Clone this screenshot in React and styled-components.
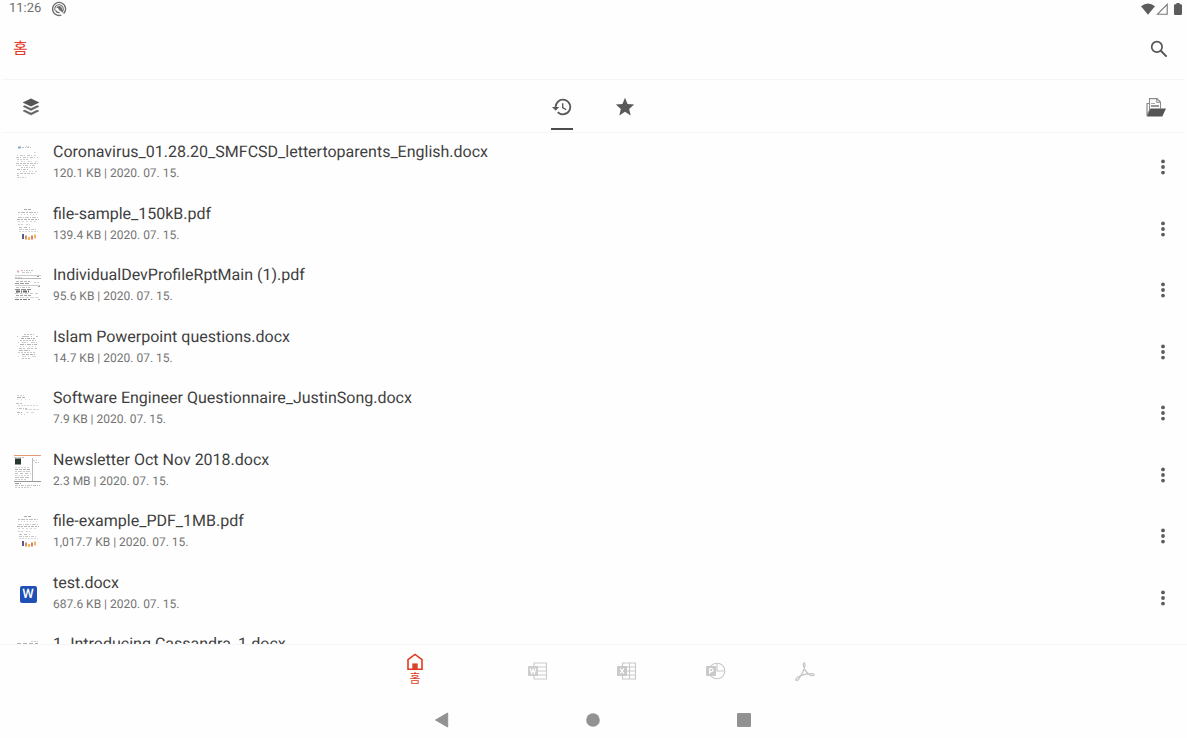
import React from "react";
import styled, { createGlobalStyle, css } from "styled-components";

const GlobalStyle = createGlobalStyle`
  *, *::before, *::after { box-sizing: border-box; }
  body {
    margin: 0;
    background: #fefefe;
    color: #3c3c3c;
    font-family: Roboto, "Noto Sans CJK KR", sans-serif;
    text-rendering: geometricPrecision;
  }
  button { border: 0; margin: 0; padding: 0; background: none; color: inherit; font: inherit; cursor: pointer; }
  svg { display: block; flex: none; }
`;

const Screen = styled.div`
  display: flex;
  flex-direction: column;
  height: 100vh;
`;

const StatusBar = styled.div`
  display: flex;
  align-items: center;
  justify-content: space-between;
  height: 18px;
  padding: 0 5px 0 9px;
  font-size: 13px;
  line-height: 18px;
  color: #707070;
`;

const StatusGroup = styled.div`
  display: flex;
  align-items: center;
  gap: ${(p) => p.$gap}px;
`;

const Header = styled.header`
  display: flex;
  align-items: center;
  justify-content: space-between;
  height: 62px;
  margin: 0 2px;
  padding: 0 16px 0 11px;
  border-bottom: 1px solid #f5f5f5;
`;

const Title = styled.h1`
  margin: 0;
  font-size: 16px;
  line-height: 20px;
  font-weight: 400;
  color: #e23b2c;
`;

const IconButton = styled.button`
  display: flex;
  align-items: center;
  justify-content: center;
  width: 20px;
  height: 24px;
  color: #555;
`;

const Toolbar = styled.div`
  display: grid;
  grid-template-columns: 1fr auto 1fr;
  align-items: center;
  height: 53px;
  margin: 0 2px;
  padding: 2px 19px 0;
  border-bottom: 1px solid #f7f7f7;
`;

const ToolbarEnd = styled.div`
  display: flex;
  justify-content: flex-end;
`;

const Tabs = styled.div`
  display: flex;
  align-self: stretch;
`;

const Tab = styled.button`
  display: flex;
  flex-direction: column;
  align-items: center;
  justify-content: space-between;
  width: 63px;
  padding: 14px 0 2px;
  color: #595959;
  &::after {
    content: "";
    width: 22px;
    height: 2px;
    background: ${(p) => (p["aria-selected"] ? "#4c4c4c" : "transparent")};
  }
`;

const FileList = styled.ul`
  flex: 1;
  min-height: 0;
  overflow: hidden;
  margin: 0;
  padding: 0;
  list-style: none;
`;

const FileRow = styled.li`
  display: flex;
  align-items: flex-start;
  height: 62px;
  padding: 9px 14px 0;
  &:nth-child(even) { height: 61px; }
`;

const Thumb = styled.div`
  display: flex;
  align-items: center;
  justify-content: center;
  width: 28px;
  height: 36px;
  margin-top: 3px;
`;

const FileText = styled.div`
  flex: 1;
  min-width: 0;
  padding-left: 11px;
`;

const FileName = styled.div`
  font-size: 16px;
  line-height: 20px;
  color: #3f3f3f;
`;

const FileMeta = styled.div`
  padding-top: 3px;
  font-size: 12px;
  line-height: 16px;
  color: #747474;
`;

const MoreButton = styled(IconButton)`
  margin-top: 13px;
`;

const WordBadge = styled.span`
  width: 17px;
  height: 17px;
  border-radius: 2px;
  background: #1f50b5;
  color: #fff;
  font-size: 13px;
  line-height: 17px;
  font-weight: 500;
  text-align: center;
`;

const AppNav = styled.nav`
  display: flex;
  justify-content: center;
  height: 57px;
  padding-right: 1px;
  border-top: 1px solid #f5f5f5;
`;

const NavItem = styled.button`
  display: flex;
  flex-direction: column;
  align-items: center;
  width: 89px;
  padding-top: 17px;
  color: #c9c9c9;
  font-size: 12px;
  line-height: 16px;
  ${(p) =>
    p.$active &&
    css`
      width: 157px;
      padding-top: 8px;
      color: #e03a20;
    `}
`;

const SystemNav = styled.nav`
  display: flex;
  justify-content: center;
  height: 37px;
  padding-right: 1px;
`;

const SystemButton = styled.button`
  display: flex;
  justify-content: center;
  align-items: center;
  width: 151px;
  color: #929292;
`;

/* Each line of a page preview: [y, x1, x2, shade, dash pattern, thickness] */
const letterLines = [
  [2, 4, 7, "#5b93b8", "3 1", 2], [2, 8, 17, "#aaa", "2 1 1 1"], [1, 12, 16, "#bbb", "1 1"],
  [7, 20, 23, "#ccc", "2 1"], [10, 3, 22, "#bbb", "1 2 3 1"], [12, 2, 24, "#b0b0b0", "3 1 1 2"],
  [14, 3, 14, "#bbb", "2 1"], [16, 3, 23, "#c8c8c8", "1 3 2 1"], [18, 2, 24, "#aaa", "3 1 2 1"],
  [20, 2, 23, "#bcbcbc", "1 1 3 2"], [22, 7, 22, "#b6b6b6", "2 1 1 1"], [24, 3, 15, "#a8a8a8", "3 1 1 1"],
  [26, 6, 24, "#c0c0c0", "1 2 2 1"], [28, 3, 21, "#b0b0b0", "2 1 3 1"], [30, 3, 6, "#b0b0b0", "2 1"], [32, 3, 12, "#bbb", "2 1 1 1"],
];
const sampleLines = [
  [2, 10, 18, "#8d8d8d", "3 1"], [5, 4, 24, "#aaa", "2 1 4 1"], [7, 4, 24, "#c5c5c5", "1 2"],
  [10, 4, 25, "#b4b4b4", "4 1 1 1"], [12, 3, 25, "#999", "3 1 2 1"], [14, 4, 23, "#ccc", "2 2"],
  [17, 4, 9, "#bbb", "2 1"], [17, 12, 16, "#bbb", "2 1"], [20, 5, 16, "#aaa", "3 2"],
  [22, 5, 23, "#b5b5b5", "3 1 1 1"], [24, 5, 24, "#ccc", "2 1"], [29, 8, 10, "#555d90", "none", 5],
  [30, 11, 13, "#dc9060", "none", 4], [31, 14, 16, "#efb755", "none", 3], [30, 17, 19, "#d78263", "none", 4], [29, 20, 22, "#f2b568", "none", 4],
];
const previews = {
  letter: letterLines,
  sample: sampleLines,
  profile: [
    [3, 3, 6, "#d2899b", "2 1", 2], [2, 7, 19, "#aaa", "2 1 1 1"], [4, 8, 17, "#bbb", "3 1"],
    [7, 1, 27, "#ccc", "none"], [9, 1, 8, "#bbb", "2 1"], [8, 23, 25, "#77b77c", "none"], [10, 1, 27, "#bbb", "none"],
    [13, 2, 16, "#999", "3 1"], [14, 20, 26, "#bbb", "2 1"], [15, 1, 15, "#777", "4 1"], [17, 1, 26, "#ccc", "none"],
    [19, 2, 16, "#aaa", "3 1 1 1"], [18, 24, 26, "#88b98b", "none"], [21, 1, 17, "#666", "5 1"], [23, 2, 15, "#333", "4 1 1 1", 2],
    [25, 1, 24, "#bbb", "3 2"], [27, 2, 17, "#888", "3 1"], [29, 1, 25, "#ccc", "4 1"], [31, 1, 16, "#555", "4 1 2 1"], [31, 24, 26, "#a2c9a4", "none"],
  ],
  questions: [
    [4, 10, 20, "#aaa", "2 1"], [6, 3, 24, "#aaa", "1 4 7 2"], [8, 7, 21, "#909090", "3 1 1 1"],
    [10, 6, 22, "#aaa", "2 1"], [12, 4, 24, "#bbb", "1 3 4 1"], [14, 6, 23, "#999", "4 1 1 1"],
    [16, 3, 22, "#ccc", "1 2"], [18, 5, 23, "#aaa", "3 1 2 2"], [20, 5, 16, "#a2a2a2", "4 1"],
    [22, 4, 22, "#b8b8b8", "2 1"], [24, 8, 21, "#999", "3 1"], [26, 4, 24, "#ccc", "1 3 4 2"], [28, 8, 16, "#aaa", "2 1"],
  ],
  questionnaire: [
    [4, 3, 10, "#bbb", "2 1"], [6, 3, 11, "#999", "4 1"], [8, 3, 17, "#ccc", "1 3"],
    [12, 2, 8, "#aaa", "3 1"], [14, 4, 25, "#ccc", "2 1"], [17, 3, 13, "#aaa", "1 1 3 1"],
    [18, 11, 25, "#c8c8c8", "3 1"], [21, 3, 8, "#999", "3 1"], [21, 12, 22, "#ccc", "3 2"], [23, 4, 13, "#bbb", "1 2"],
  ],
  newsletter: [
    [2, 0, 27, "#e89a78", "none"], [4, 0, 10, "#aaa", "3 1"], [8, 1, 7, "#29382e", "none", 6], [9, 18, 27, "#aaa", "1 2 2 1"],
    [7, 19, 23, "#bbb", "2 1"], [14, 1, 16, "#ccc", "2 1"], [16, 1, 17, "#999", "3 1"], [18, 1, 16, "#bbb", "2 1 4 1"],
    [20, 1, 17, "#aaa", "3 2"], [22, 1, 15, "#c5c5c5", "2 1"], [24, 1, 16, "#aaa", "4 1"], [26, 1, 12, "#bbb", "2 1"],
    [28, 0, 27, "#999", "none"], [30, 1, 7, "#777", "4 1"], [32, 1, 26, "#aaa", "3 1 1 1"], [34, 1, 17, "#bbb", "2 1"],
  ],
  cassandra: [
    [4, 17, 24, "#bbb", "2 1"], [6, 3, 24, "#999", "4 2"], [8, 3, 14, "#aaa", "2 1"],
  ],
};

const PagePreview = ({ lines }) => (
  <svg width="28" height="36" viewBox="0 0 28 36" aria-hidden="true">
    {lines.map(([y, x1, x2, stroke, dash, w = 1], i) => (
      <path
        key={i}
        d={`M${x1} ${y + 0.5}H${x2}`}
        stroke={stroke}
        strokeDasharray={dash}
        strokeWidth={w}
        opacity={dash === "none" ? 1 : 0.75}
      />
    ))}
    {lines === previews.newsletter && <path d="M18.5 5V28" stroke="#bbb" />}
  </svg>
);

const files = [
  ["Coronavirus_01.28.20_SMFCSD_lettertoparents_English.docx", "120.1 KB", "letter"],
  ["file-sample_150kB.pdf", "139.4 KB", "sample"],
  ["IndividualDevProfileRptMain (1).pdf", "95.6 KB", "profile"],
  ["Islam Powerpoint questions.docx", "14.7 KB", "questions"],
  ["Software Engineer Questionnaire_JustinSong.docx", "7.9 KB", "questionnaire"],
  ["Newsletter Oct Nov 2018.docx", "2.3 MB", "newsletter"],
  ["file-example_PDF_1MB.pdf", "1,017.7 KB", "sample"],
  ["test.docx", "687.6 KB", null],
  ["1. Introducing Cassandra_1.docx", null, "cassandra"],
];

const NotificationIcon = () => (
  <svg width="16" height="16" viewBox="0 0 16 16" fill="none" stroke="#6a6a6a" aria-hidden="true">
    <path d="M12.6 12.6A6.5 6.5 0 1 0 10.4 14" strokeWidth="1.3" />
    <path d="M11.4 10.6A4.3 4.3 0 1 0 4 9.6" strokeWidth="1.1" />
    <path d="M5.2 6.8Q6.6 4.4 9.2 5.2Q11.4 6.2 11.3 9L12.4 12.2L9 9.4Q7.6 9.6 7.4 7.6Q6.4 6.6 5.2 6.8Z" fill="#6a6a6a" stroke="none" />
    <path d="M4.6 9.4Q5.6 11.8 8.6 11.6" strokeWidth="1.3" />
  </svg>
);

const WifiIcon = () => (
  <svg width="14" height="12" viewBox="0 0 14 12" fill="#5c5c5c" aria-hidden="true">
    <path d="M0 3.2Q7-2.4 14 3.2L7 11.7Z" />
  </svg>
);

const SignalIcon = () => (
  <svg width="12" height="12" viewBox="0 0 12 12" fill="none" stroke="#777" strokeWidth="1.1" aria-hidden="true">
    <path d="M1.5 11.2H11.2V1.3Z" />
  </svg>
);

const BatteryIcon = () => (
  <svg width="8" height="12" viewBox="0 0 8 12" fill="#5c5c5c" aria-hidden="true">
    <path d="M2.4 0H5.6V1.2H7Q8 1.2 8 2.2V11Q8 12 7 12H1Q0 12 0 11V2.2Q0 1.2 1 1.2H2.4Z" />
  </svg>
);

const SearchIcon = () => (
  <svg width="18" height="18" viewBox="0 0 18 18" fill="none" stroke="#555" aria-hidden="true">
    <circle cx="6.9" cy="6.9" r="5.2" strokeWidth="1.7" />
    <path d="M10.8 10.8L16.6 16.6" strokeWidth="2" />
  </svg>
);

const LayersIcon = () => (
  <svg width="18" height="18" viewBox="0 0 18 18" aria-hidden="true">
    <path d="M9 0.4L17.4 4.5L9 8.5L0.6 4.5Z" fill="#555" />
    <path d="M1 8.5L2.8 7.6L9 10.5L15.2 7.6L17 8.5L9 12.6ZM1 13L2.8 12.1L9 15L15.2 12.1L17 13L9 17.1Z" fill="#606060" stroke="#606060" strokeWidth="0.4" />
  </svg>
);

const HistoryIcon = () => (
  <svg width="22" height="22" viewBox="0 0 24 24" fill="currentColor" aria-hidden="true">
    <path d="M13 3a9 9 0 0 0-9 9H1l3.9 3.9.1.1L9 12H6a7 7 0 1 1 2.06 4.94l-1.42 1.42A9 9 0 1 0 13 3zm-1 5v5l4.28 2.54.72-1.21-3.5-2.08V8z" />
  </svg>
);

const StarIcon = () => (
  <svg width="22" height="22" viewBox="0 0 24 24" fill="currentColor" aria-hidden="true">
    <path d="M12 17.27L18.18 21.2L16.54 14.1L22 9.24L14.81 8.63L12 2L9.19 8.63L2 9.24L7.46 14.1L5.82 21.2Z" />
  </svg>
);

const OpenFolderIcon = () => (
  <svg width="20" height="19" viewBox="0 0 20 19" fill="none" aria-hidden="true">
    <path d="M3 5.5H1V18L4 11" stroke="#8a8a8a" strokeWidth="1.2" />
    <path d="M3.5 12V0.6H11L14.5 4V10.5M10.8 0.8V4.2H14.3" stroke="#8a8a8a" strokeWidth="1.1" />
    <path d="M5 5.5H9" stroke="#aaa" />
    <path d="M5 8H13" stroke="#555" strokeWidth="1.2" />
    <path d="M4.5 10.5H20L16.3 18.5H1Z" fill="#555" />
  </svg>
);

const MoreIcon = () => (
  <svg width="6" height="16" viewBox="0 0 6 16" fill="#5c5c5c" aria-hidden="true">
    <circle cx="3" cy="2.4" r="1.9" />
    <circle cx="3" cy="8" r="1.9" />
    <circle cx="3" cy="13.6" r="1.9" />
  </svg>
);

const HomeIcon = () => (
  <svg width="16" height="18" viewBox="0 0 16 18" aria-hidden="true">
    <path d="M1 16.2V6.6L8 1.4L15 6.6V16.2Z" fill="none" stroke="#e03a20" strokeWidth="1.6" />
    <path d="M5.3 16V10.4H10.7V16Z" fill="#d8442b" />
  </svg>
);

const WordIcon = () => (
  <svg width="20" height="18" viewBox="0 0 20 18" fill="none" stroke="#cacaca" aria-hidden="true">
    <path d="M6 4V1H18.5V17H6V14M6 5H18.5M9 9H18.5M6 13H18.5" strokeWidth="1.1" />
    <rect x="0.6" y="4.6" width="8.8" height="8.8" fill="#d0d0d0" />
    <path d="M2.2 6.5L3.7 11.2L5 7.5L6.3 11.2L7.8 6.5" stroke="#fff" strokeWidth="1.1" />
  </svg>
);

const ExcelIcon = () => (
  <svg width="20" height="18" viewBox="0 0 20 18" fill="none" stroke="#c8c8c8" aria-hidden="true">
    <path d="M5.5 4V1H18.5V17H5.5V14M6 5H18.5M9 9H18.5M6 13H18.5M12.5 1V17" strokeWidth="1.1" />
    <rect x="0.6" y="4.6" width="8.8" height="8.8" fill="#c8c8c8" />
    <path d="M3 6.3L7 11.7M7 6.3L3 11.7" stroke="#fff" strokeWidth="1.2" />
  </svg>
);

const PowerPointIcon = () => (
  <svg width="20" height="18" viewBox="0 0 20 18" fill="none" stroke="#c8c8c8" aria-hidden="true">
    <circle cx="11" cy="9" r="7.8" strokeWidth="1.1" />
    <path d="M11 1.2V9H18.8" strokeWidth="1.1" />
    <rect x="0.6" y="4.6" width="8.8" height="8.8" fill="#c8c8c8" />
    <path d="M3.7 12V6.5H5.5A1.6 1.6 0 0 1 5.5 9.7H3.7" stroke="#fff" strokeWidth="1.2" />
  </svg>
);

const AcrobatIcon = () => (
  <svg width="20" height="20" viewBox="0 0 20 20" fill="none" stroke="#c4c4c4" strokeWidth="1.2" strokeLinejoin="round" aria-hidden="true">
    <path d="M9.6 5.2C10.3 2.7 10.1 0.8 9.2 0.8C8.2 0.8 8 2.7 8.9 5C9.9 8.4 12.2 11.3 14.8 12.9C16.6 14 18.9 14 19.1 13C19.3 12 17.5 11.4 15 11.6C11.6 11.7 7 12.9 4 14.5C1.7 15.7 0.4 17.2 1 18.2C1.7 19 3.1 18 4.5 15.9C6.6 12.7 8.8 8.6 9.6 5.2Z" />
  </svg>
);

const BackIcon = () => (
  <svg width="16" height="16" viewBox="0 0 16 16" fill="currentColor" aria-hidden="true">
    <path d="M1.5 8L13.7 1V15Z" stroke="currentColor" strokeLinejoin="round" />
  </svg>
);

const CircleIcon = () => (
  <svg width="14" height="14" viewBox="0 0 14 14" fill="currentColor" aria-hidden="true"><circle cx="7" cy="7" r="6.8" /></svg>
);

const SquareIcon = () => (
  <svg width="14" height="14" viewBox="0 0 14 14" fill="currentColor" aria-hidden="true"><rect width="14" height="14" rx="1" /></svg>
);

const appSections = [
  ["Word", WordIcon],
  ["Excel", ExcelIcon],
  ["PowerPoint", PowerPointIcon],
  ["PDF", AcrobatIcon],
];

const systemActions = [
  ["뒤로", BackIcon],
  ["홈 화면", CircleIcon],
  ["최근 앱", SquareIcon],
];

export default function App() {
  return (
    <Screen>
      <GlobalStyle />
      <StatusBar>
        <StatusGroup $gap={10}>
          <span>11:26</span>
          <NotificationIcon />
        </StatusGroup>
        <StatusGroup $gap={6}>
          <StatusGroup $gap={1}>
            <WifiIcon />
            <SignalIcon />
          </StatusGroup>
          <BatteryIcon />
        </StatusGroup>
      </StatusBar>
      <Header>
        <Title>홈</Title>
        <IconButton aria-label="검색"><SearchIcon /></IconButton>
      </Header>
      <Toolbar>
        <IconButton aria-label="모든 문서"><LayersIcon /></IconButton>
        <Tabs role="tablist">
          <Tab role="tab" aria-selected={true} aria-label="최근 문서"><HistoryIcon /></Tab>
          <Tab role="tab" aria-selected={false} aria-label="즐겨찾기"><StarIcon /></Tab>
        </Tabs>
        <ToolbarEnd>
          <IconButton aria-label="열기"><OpenFolderIcon /></IconButton>
        </ToolbarEnd>
      </Toolbar>
      <FileList>
        {files.map(([name, size, preview]) => (
          <FileRow key={name}>
            <Thumb>
              {preview ? <PagePreview lines={previews[preview]} /> : <WordBadge aria-hidden="true">W</WordBadge>}
            </Thumb>
            <FileText>
              <FileName>{name}</FileName>
              {size && <FileMeta>{size} | 2020. 07. 15.</FileMeta>}
            </FileText>
            <MoreButton aria-label={`${name} 메뉴`}><MoreIcon /></MoreButton>
          </FileRow>
        ))}
      </FileList>
      <AppNav>
        <NavItem $active aria-current="page"><HomeIcon />홈</NavItem>
        {appSections.map(([label, Icon]) => (
          <NavItem key={label} aria-label={label}><Icon /></NavItem>
        ))}
      </AppNav>
      <SystemNav>
        {systemActions.map(([label, Icon]) => (
          <SystemButton key={label} aria-label={label}><Icon /></SystemButton>
        ))}
      </SystemNav>
    </Screen>
  );
}
